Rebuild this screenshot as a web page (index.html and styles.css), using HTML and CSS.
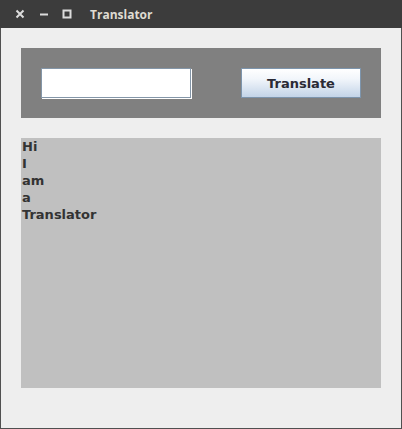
FILE: index.html
```html
<!DOCTYPE html>
<html>
<head>
<meta charset="utf-8">
<link rel="stylesheet" href="styles.css">
</head>
<body>
<div class="window">
  <div class="titlebar">
    <span class="wbtn close">
      <svg width="10" height="10" viewBox="0 0 10 10"><path d="M1.5 1.5L8.5 8.5M8.5 1.5L1.5 8.5" stroke="#dcdcdc" stroke-width="2"/></svg>
    </span>
    <span class="wbtn min">
      <svg width="10" height="10" viewBox="0 0 10 10"><path d="M1 5.5H9" stroke="#dcdcdc" stroke-width="2"/></svg>
    </span>
    <span class="wbtn max">
      <svg width="10" height="10" viewBox="0 0 10 10"><rect x="1.5" y="1.5" width="7" height="7" fill="none" stroke="#dcdcdc" stroke-width="2"/></svg>
    </span>
    <span class="title">Translator</span>
  </div>
  <div class="content">
    <div class="panel">
      <input class="field" type="text">
      <button class="btn">Translate</button>
    </div>
    <div class="output">Hi<br>I<br>am<br>a<br>Translator</div>
  </div>
</div>
</body>
</html>
```
FILE: styles.css
```css
html, body {
  margin: 0;
  padding: 0;
  background: #eeeeee;
}
.window {
  width: 402px;
  height: 429px;
  box-sizing: border-box;
  border: 1px solid #505050;
  border-top: none;
  background: #eeeeee;
  display: flex;
  flex-direction: column;
}
.titlebar {
  height: 28px;
  margin: 0 -1px;
  background: #3c3c3c;
  display: flex;
  align-items: center;
  font-family: "Open Sans", "DejaVu Sans", sans-serif;
}
.wbtn {
  width: 10px;
  height: 10px;
  display: flex;
}
.close { margin-left: 15px; }
.min { margin-left: 14px; }
.max { margin-left: 13px; }
.title {
  margin-left: 18px;
  color: #dfdbd2;
  font-weight: bold;
  font-size: 12px;
}
.content {
  padding: 20px 20px 0 20px;
  display: flex;
  flex-direction: column;
  gap: 20px;
}
.panel {
  height: 70px;
  background: #808080;
  display: flex;
  align-items: flex-start;
  justify-content: space-between;
  padding: 20px 20px 0 20px;
  box-sizing: border-box;
}
.field {
  width: 150px;
  height: 30px;
  box-sizing: border-box;
  margin: 0;
  padding: 0;
  background: #ffffff;
  border: 1px solid #8496a8;
  box-shadow: 1px 1px 0 #ffffff;
  outline: none;
}
.btn {
  width: 120px;
  height: 30px;
  box-sizing: border-box;
  margin: 0;
  padding: 0;
  border: 1px solid #7d95ad;
  background: linear-gradient(#ffffff 0%, #f2f6fb 35%, #c3d4e8 100%);
  font-family: "DejaVu Sans", sans-serif;
  font-weight: bold;
  font-size: 13px;
  color: #2a2a35;
}
.output {
  height: 250px;
  background: #c0c0c0;
  padding: 0 0 0 1px;
  box-sizing: border-box;
  font-family: "DejaVu Sans", sans-serif;
  font-weight: bold;
  font-size: 13px;
  line-height: 17px;
  color: #333333;
}
```
